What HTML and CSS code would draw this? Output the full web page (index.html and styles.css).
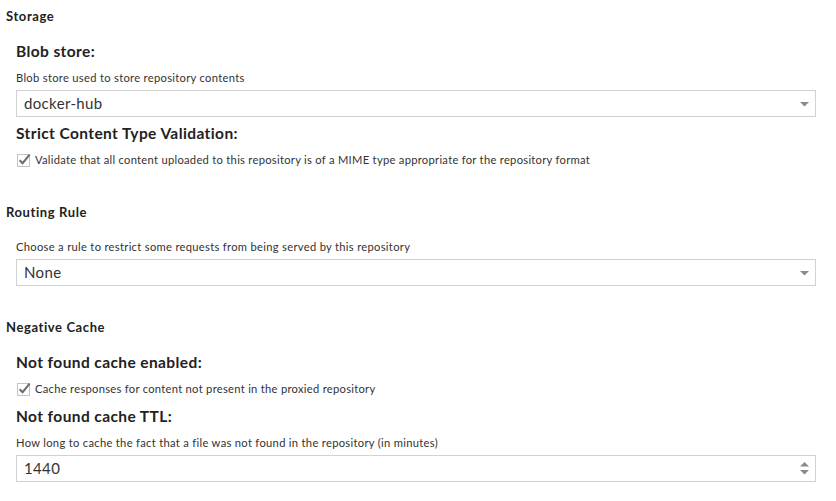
FILE: index.html
```html
<!DOCTYPE html>
<html>
<head>
<meta charset="utf-8">
<link rel="stylesheet" href="styles.css">
</head>
<body>
<div class="page">
  <section class="section">
    <div class="section-title">Storage</div>
    <div class="fields">
      <div class="field">
        <div class="field-label">Blob store:</div>
        <div class="help">Blob store used to store repository contents</div>
        <div class="input combo">
          <span class="value">docker-hub</span>
          <svg class="trigger" width="9" height="5" viewBox="0 0 9 5"><path d="M0 0H9L4.5 4.5Z" fill="#8a8a8a"/></svg>
        </div>
      </div>
      <div class="field">
        <div class="field-label">Strict Content Type Validation:</div>
        <label class="check">
          <svg class="box" width="14" height="15" viewBox="0 0 14 15"><rect x="0.5" y="2.5" width="12" height="12" fill="#fff" stroke="#c4c4c4"/><path d="M2.6 8.2L5.6 11.2L12.6 2.6" fill="none" stroke="#6b6b6b" stroke-width="2"/></svg>
          <span>Validate that all content uploaded to this repository is of a MIME type appropriate for the repository format</span>
        </label>
      </div>
    </div>
  </section>

  <section class="section">
    <div class="section-title">Routing Rule</div>
    <div class="fields no-label">
      <div class="field">
        <div class="help">Choose a rule to restrict some requests from being served by this repository</div>
        <div class="input combo">
          <span class="value">None</span>
          <svg class="trigger" width="9" height="5" viewBox="0 0 9 5"><path d="M0 0H9L4.5 4.5Z" fill="#8a8a8a"/></svg>
        </div>
      </div>
    </div>
  </section>

  <section class="section">
    <div class="section-title">Negative Cache</div>
    <div class="fields">
      <div class="field">
        <div class="field-label">Not found cache enabled:</div>
        <label class="check">
          <svg class="box" width="14" height="15" viewBox="0 0 14 15"><rect x="0.5" y="2.5" width="12" height="12" fill="#fff" stroke="#c4c4c4"/><path d="M2.6 8.2L5.6 11.2L12.6 2.6" fill="none" stroke="#6b6b6b" stroke-width="2"/></svg>
          <span>Cache responses for content not present in the proxied repository</span>
        </label>
      </div>
      <div class="field">
        <div class="field-label">Not found cache TTL:</div>
        <div class="help">How long to cache the fact that a file was not found in the repository (in minutes)</div>
        <div class="input spinner">
          <span class="value">1440</span>
          <span class="spin">
            <svg width="9" height="5" viewBox="0 0 9 5"><path d="M0 4.5H9L4.5 0Z" fill="#8a8a8a"/></svg>
            <svg width="9" height="5" viewBox="0 0 9 5"><path d="M0 0H9L4.5 4.5Z" fill="#8a8a8a"/></svg>
          </span>
        </div>
      </div>
    </div>
  </section>
</div>
</body>
</html>
```

FILE: styles.css
```css
html, body {
  margin: 0;
  padding: 0;
  background: #fff;
}

body {
  font-family: Lato, "Noto Sans", sans-serif;
  color: #333;
}

.page {
  width: 836px;
  padding: 8px 0 0 6px;
  box-sizing: border-box;
  display: flex;
  flex-direction: column;
  gap: 27px;
}

.section,
.fields,
.field {
  display: flex;
  flex-direction: column;
}

.section-title {
  font-size: 13px;
  font-weight: 700;
  line-height: 16px;
  letter-spacing: 0.6px;
  color: #222;
}

.fields {
  padding-left: 10px;
  margin-top: 17px;
}

.fields.no-label {
  margin-top: 20px;
}

.field-label {
  font-size: 15.5px;
  font-weight: 700;
  line-height: 20px;
  letter-spacing: 0.4px;
  color: #222;
}

.help {
  font-size: 11.2px;
  line-height: 14px;
  letter-spacing: 0.3px;
  margin-top: 10px;
}

.fields.no-label .help {
  margin-top: 0;
}

.input {
  margin-top: 5px;
  margin-bottom: 6px;
  width: 800px;
  height: 27px;
  box-sizing: border-box;
  border: 1px solid #d2d2d2;
  display: flex;
  align-items: center;
  justify-content: space-between;
  padding: 0 6px 0 7px;
}

.value {
  font-size: 15px;
  line-height: 25px;
  letter-spacing: 0.35px;
  color: #333;
}

.trigger {
  display: block;
  margin-top: 1px;
}

.spin {
  display: flex;
  flex-direction: column;
  gap: 3px;
}

.spin svg {
  display: block;
}

.check {
  display: flex;
  align-items: center;
  gap: 4px;
  margin-top: 10px;
  margin-bottom: 10px;
  padding-left: 1px;
  font-size: 11.2px;
  line-height: 14px;
  letter-spacing: 0.28px;
}

.box {
  display: block;
  flex: none;
  margin-top: -2px;
}
```
